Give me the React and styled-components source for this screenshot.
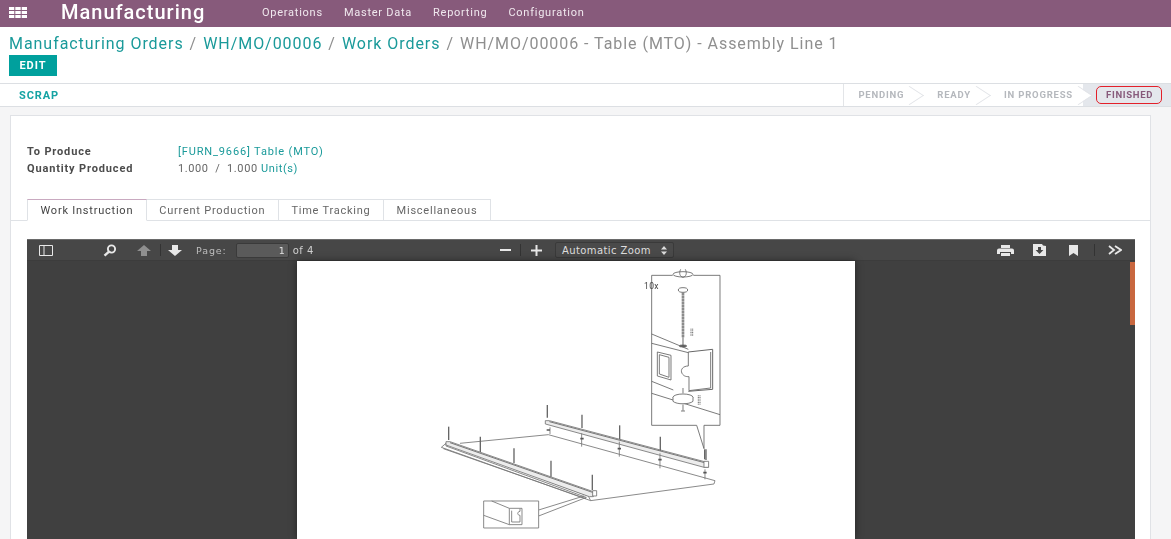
import styled, { createGlobalStyle } from "styled-components";

const GlobalStyle = createGlobalStyle`
  html, body {
    margin: 0;
    height: 100%;
    overflow: hidden;
    background: #f5f5f6;
    font-family: Roboto, "Liberation Sans", sans-serif;
  }
  * {
    box-sizing: border-box;
  }
`;

const STEPS = ["PENDING", "READY", "IN PROGRESS"];
const TABS = ["Work Instruction", "Current Production", "Time Tracking", "Miscellaneous"];
const MENU = ["Operations", "Master Data", "Reporting", "Configuration"];

function Bolts({ points }) {
  return points.map(([x, y, h], i) => (
    <path key={i} d={`M${x} ${y}V${y + h}`} strokeWidth="4" stroke="#666" />
  ));
}

function AssemblyDrawing() {
  return (
    <Drawing viewBox="297 261 558 278">
      {/* zoomed detail of the screw and the rail */}
      <g transform="translate(620 262) scale(.3333)" fill="none" stroke="#666" strokeWidth="2.6">
        <path d="M158 40H95V490H230L252 560V490H300V40H220" />
        <ellipse cx="189" cy="37" rx="30" ry="8" fill="#fff" />
        <path d="M182 22C176 34 180 44 189 46C198 44 202 34 196 22" />
        <ellipse cx="189" cy="84" rx="14" ry="7" />
        <path d="M189 92V226" strokeWidth="8" stroke="#666" strokeDasharray="3 1.5" />
        <path d="M189 226V250" strokeWidth="3" />
        <ellipse cx="189" cy="252" rx="11" ry="3" fill="#555" />
        <path d="M95 216L205 262M95 244L205 272M95 358L160 384M95 394L300 458" />
        <path d="M205 270L278 262V382L205 388" strokeWidth="3" />
        <path d="M205 270V312C190 312 180 322 186 334C192 344 200 344 207 344V386L272 378V270" />
        <path d="M112 270L153 280V354L112 342Z" />
        <path d="M118 278L147 286V346L118 336Z" />
        <path d="M189 378V394" />
        <ellipse cx="189" cy="406" rx="30" ry="10" fill="#fff" />
        <path d="M159 406V418C170 428 208 428 219 418V406" fill="#fff" />
        <path d="M189 428V446M183 447H195" />
        <path d="M213 200V222M218 200V222M235 400V428M240 400V428" strokeDasharray="3 2" strokeWidth="3" />
        <path d="M258 562V594" strokeWidth="4" />
      </g>
      <text x="644" y="289" fontFamily="Roboto, sans-serif" fontSize="8.5" fill="#444" letterSpacing=".4">
        10x
      </text>
      {/* table top with the two rails */}
      <g transform="translate(430 390) scale(.3333)" fill="none" stroke="#777" strokeWidth="2.6">
        <path d="M34 172L48 160L475 318L482 332L34 172Z" fill="#fff" />
        <path d="M40 176L468 326M48 160L48 168L468 322" />
        <path d="M48 155L60 155L490 305V320L478 320L48 165Z" fill="#ececec" strokeWidth="2.6" />
        <path d="M60 158L490 308" strokeWidth="3" />
        <path d="M90 160L355 134L855 272L852 282L482 332" />
        <path d="M346 92H358L835 218V232H822L346 102Z" fill="#ececec" strokeWidth="2.6" />
        <path d="M358 95L835 221" strokeWidth="3" />
        <path d="M360 112V132M455 130V170M568 155V200M690 190V235M825 238V268" />
        <Bolts
          points={[
            [56, 110, 40],
            [151, 140, 46],
            [252, 175, 44],
            [363, 212, 48],
            [487, 254, 46],
            [352, 45, 38],
            [456, 74, 40],
            [569, 106, 42],
            [691, 140, 42],
            [824, 178, 30],
          ]}
        />
        <path d="M350 120H360M451 146H461M563 176H573M685 209H695M820 248H830" strokeWidth="5" stroke="#555" />
        <path d="M822 214H836V232H822Z" fill="#fff" />
        <path d="M488 302H500V318H488Z" fill="#fff" />
        <path d="M326 360L462 318M326 378L470 322" />
        <path d="M161 333H326V414H161Z" fill="#fff" />
        <path d="M161 376L238 404M185 333L238 355H276V404H238V355M245 362V396H270V376C262 376 260 366 270 364V356" />
      </g>
    </Drawing>
  );
}

export default function App() {
  return (
    <Page>
      <GlobalStyle />
      <Navbar>
        <AppsIcon>
          <svg width="18" height="11" viewBox="0 0 18 11" fill="#fff">
            <path d="M0 0h5.300v3H0zM6.300 0h5.400v3H6.300zM12.700 0H18v3h-5.300zM0 4h5.300v3H0zM6.300 4h5.400v3H6.300zM12.700 4H18v3h-5.300zM0 8h5.300v3H0zM6.300 8h5.400v3H6.300zM12.700 8H18v3h-5.300z" />
          </svg>
        </AppsIcon>
        <Brand>Manufacturing</Brand>
        <Menu>
          {MENU.map((item) => (
            <MenuItem key={item}>{item}</MenuItem>
          ))}
        </Menu>
      </Navbar>
      <ControlPanel>
        <Breadcrumb>
          <Crumb>Manufacturing Orders</Crumb>
          <Slash>/</Slash>
          <Crumb>WH/MO/00006</Crumb>
          <Slash>/</Slash>
          <Crumb>Work Orders</Crumb>
          <Slash>/</Slash>
          <span>WH/MO/00006 - Table (MTO) - Assembly Line 1</span>
        </Breadcrumb>
        <EditButton>EDIT</EditButton>
      </ControlPanel>
      <StatusRow>
        <ScrapButton>SCRAP</ScrapButton>
        <Steps>
          {STEPS.map((step) => (
            <Step key={step}>{step}</Step>
          ))}
          <ActiveStep>
            FINISHED
            <RedMark />
          </ActiveStep>
        </Steps>
      </StatusRow>
      <Content>
        <Sheet>
          <Fields>
            <FieldLabel>To Produce</FieldLabel>
            <FieldLink>[FURN_9666] Table (MTO)</FieldLink>
            <FieldLabel>Quantity Produced</FieldLabel>
            <FieldValue>
              1.000 &nbsp;/&nbsp; 1.000 <FieldLink>Unit(s)</FieldLink>
            </FieldValue>
          </Fields>
          <Tabs>
            {TABS.map((tab, i) => (
              <Tab key={tab} $active={i === 0}>
                {tab}
              </Tab>
            ))}
          </Tabs>
          <Viewer>
            <Toolbar>
              <ToolGroup $width={460}>
                <ToolButton>
                  <svg width="14" height="11" viewBox="0 0 14 11">
                    <path d="M.5.5h13v10H.5z" fill="none" stroke="#e8e8e8" />
                    <path d="M5 1v9" stroke="#e8e8e8" />
                  </svg>
                </ToolButton>
                <Spacer $width={32} />
                <ToolButton>
                  <svg width="14" height="13" viewBox="0 0 14 13">
                    <circle cx="8.500" cy="5" r="3.600" fill="none" stroke="#e8e8e8" strokeWidth="1.900" />
                    <path d="M6 7.600L1.500 11.600" stroke="#e8e8e8" strokeWidth="2.400" />
                  </svg>
                </ToolButton>
                <Spacer $width={2} />
                <ToolButton>
                  <svg width="14" height="11" viewBox="0 0 14 11">
                    <path d="M7 0L14 6H10V11H4V6H0Z" fill="#8f8f8f" />
                  </svg>
                </ToolButton>
                <Separator />
                <ToolButton $width={28}>
                  <svg width="14" height="11" viewBox="0 0 14 11">
                    <path d="M7 11L14 5H10V0H4V5H0Z" fill="#e8e8e8" />
                  </svg>
                </ToolButton>
                <PageLabel>Page:</PageLabel>
                <PageInput>1</PageInput>
                <PageCount>of 4</PageCount>
              </ToolGroup>
              <ToolGroup>
                <ToolButton $width={30}>
                  <svg width="11" height="3" viewBox="0 0 11 3">
                    <path d="M0 0h11v2H0z" fill="#e8e8e8" />
                  </svg>
                </ToolButton>
                <Separator />
                <ToolButton $width={30}>
                  <svg width="11" height="11" viewBox="0 0 11 11">
                    <path d="M4.500 0h2v4.500H11v2H6.500V11h-2V6.500H0v-2h4.500z" fill="#e8e8e8" />
                  </svg>
                </ToolButton>
                <ZoomSelect>
                  Automatic Zoom
                  <svg width="6" height="9" viewBox="0 0 6 9">
                    <path d="M3 0L6 3.500H0zM3 9L0 5.500H6z" fill="#ddd" />
                  </svg>
                </ZoomSelect>
              </ToolGroup>
              <ToolGroup $right>
                <ToolButton>
                  <svg width="17" height="11" viewBox="0 0 17 11">
                    <path d="M4 0h9v3H4z" fill="#e8e8e8" />
                    <path d="M2 3.500h13a2 2 0 0 1 2 2V9h-3V7H3v2H0V5.500a2 2 0 0 1 2-2z" fill="#e8e8e8" />
                    <path d="M4 8h9v3H4z" fill="#e8e8e8" />
                  </svg>
                </ToolButton>
                <Spacer $width={2} />
                <ToolButton>
                  <svg width="13" height="12" viewBox="0 0 13 12">
                    <path d="M0 0h9l1 1.500L13 2v10H0z" fill="#e8e8e8" />
                    <path d="M5 3h3v3h2.400L6.500 10 2.600 6H5z" fill="#474747" />
                  </svg>
                </ToolButton>
                <Spacer $width={2} />
                <ToolButton>
                  <svg width="9" height="11" viewBox="0 0 9 11">
                    <path d="M0 0h9v11L4.500 8 0 11z" fill="#e8e8e8" />
                  </svg>
                </ToolButton>
                <Spacer $width={5} />
                <Separator />
                <Spacer $width={4} />
                <ToolButton>
                  <svg width="14" height="10" viewBox="0 0 14 10" fill="none" stroke="#e8e8e8" strokeWidth="1.800">
                    <path d="M1 1l5 4-5 4M7 1l6 4-6 4" />
                  </svg>
                </ToolButton>
              </ToolGroup>
            </Toolbar>
            <ViewerBody>
              <PdfPage>
                <AssemblyDrawing />
              </PdfPage>
              <ScrollThumb />
            </ViewerBody>
          </Viewer>
        </Sheet>
      </Content>
    </Page>
  );
}

const Page = styled.div`
  filter: blur(0.3px);
`;
const Navbar = styled.header`
  display: flex;
  align-items: center;
  height: 27px;
  padding: 0 0 3px 9px;
  background: #875a7b;
  color: #fff;
`;
const AppsIcon = styled.span`
  display: flex;
  width: 52px;
`;
const Brand = styled.span`
  width: 201px;
  font-size: 20px;
  font-weight: 500;
  letter-spacing: 1px;
`;
const Menu = styled.nav`
  display: flex;
  gap: 21px;
`;
const MenuItem = styled.a`
  font-size: 11px;
  letter-spacing: 0.75px;
  color: #f0e8ee;
`;
const ControlPanel = styled.div`
  height: 56px;
  padding: 5px 9px 0;
  background: #fff;
`;
const Breadcrumb = styled.div`
  display: flex;
  gap: 6px;
  height: 23px;
  align-items: center;
  font-size: 16px;
  letter-spacing: 0.95px;
  white-space: nowrap;
  color: #8f8f8f;
`;
const Crumb = styled.a`
  color: #1a9a9a;
`;
const Slash = styled.span`
  color: #8f8f8f;
`;
const EditButton = styled.button`
  display: block;
  width: 48px;
  height: 21px;
  padding: 0;
  border: 0;
  background: #00a09d;
  color: #fff;
  font: 700 11px Roboto, sans-serif;
  letter-spacing: 1px;
`;
const StatusRow = styled.div`
  display: flex;
  justify-content: space-between;
  height: 24px;
  background: #fff;
  border-top: 1px solid #dcdfe3;
  border-bottom: 1px solid #dcdfe3;
`;
const ScrapButton = styled.a`
  align-self: center;
  margin-left: 19px;
  font-size: 11px;
  font-weight: 700;
  letter-spacing: 0.9px;
  color: #15a3a3;
`;
const Steps = styled.div`
  display: flex;
  height: 100%;
  border-left: 1px solid #e3e5e8;
`;
const Step = styled.div`
  position: relative;
  display: flex;
  align-items: center;
  padding: 0 10px 2px 14px;
  margin-right: 9px;
  font-size: 9.5px;
  font-weight: 700;
  letter-spacing: 0.8px;
  color: #b5b8bd;
  &::after {
    content: "";
    position: absolute;
    z-index: 1;
    top: 3px;
    right: -4px;
    width: 16px;
    height: 16px;
    transform: rotate(45deg) skew(-12deg, -12deg);
    background: linear-gradient(45deg, transparent 50%, #fff 50%);
    border-top: 1px solid #e2e4e8;
    border-right: 1px solid #e2e4e8;
  }
`;
const ActiveStep = styled.div`
  position: relative;
  display: flex;
  align-items: center;
  width: 88px;
  margin-left: -9px;
  padding: 0 0 1px 23px;
  font-size: 9.5px;
  font-weight: 700;
  letter-spacing: 0.7px;
  color: #875a7b;
  background: #e4e7ec;
`;
const RedMark = styled.span`
  position: absolute;
  z-index: 2;
  top: 2px;
  left: 13px;
  width: 66px;
  height: 18px;
  border: 1.5px solid #e3202a;
  border-radius: 5px;
`;
const Content = styled.main`
  padding: 8px 20px 0 10px;
`;
const Sheet = styled.section`
  height: 424px;
  padding: 27px 15px 0 16px;
  background: #fff;
  border: 1px solid #e0e2e6;
  border-bottom: 0;
`;
const Fields = styled.div`
  display: grid;
  grid-template-columns: 151px 1fr;
  grid-auto-rows: 17px;
  align-items: center;
  font-size: 11px;
  letter-spacing: 0.85px;
`;
const FieldLabel = styled.span`
  font-weight: 700;
  color: #4c4c4c;
`;
const FieldLink = styled.a`
  color: #1a9a9a;
`;
const FieldValue = styled.span`
  color: #666;
  letter-spacing: 0.6px;
`;
const Tabs = styled.div`
  display: flex;
  height: 22px;
  margin: 22px -15px 0 -16px;
  padding-left: 16px;
  border-bottom: 1px solid #dfe2e6;
`;
const Tab = styled.div`
  display: flex;
  align-items: center;
  height: 22px;
  padding: 0 12.5px;
  font-size: 11px;
  letter-spacing: 0.77px;
  white-space: nowrap;
  color: ${(p) => (p.$active ? "#444" : "#666")};
  background: #fff;
  border: 1px solid #dfe2e6;
  border-left-width: ${(p) => (p.$active ? "1px" : "0")};
  border-bottom-color: ${(p) => (p.$active ? "#fff" : "#dfe2e6")};
  border-top-color: ${(p) => (p.$active ? "#c9a9c0" : "#dfe2e6")};
`;
const Viewer = styled.div`
  margin-top: 18px;
  background: #404040;
`;
const Toolbar = styled.div`
  display: flex;
  align-items: center;
  height: 22px;
  background: #474747;
  border-top: 1px solid #6a6a6a;
  border-bottom: 1px solid #3c3c3c;
`;
const ToolGroup = styled.div`
  display: flex;
  align-items: center;
  width: ${(p) => (p.$width ? `${p.$width}px` : "auto")};
  margin-left: ${(p) => (p.$right ? "auto" : "0")};
  padding-left: ${(p) => (p.$right ? "0" : "3px")};
  padding-right: ${(p) => (p.$right ? "4px" : "0")};
`;
const ToolButton = styled.span`
  display: flex;
  align-items: center;
  justify-content: center;
  width: ${(p) => p.$width || 32}px;
  height: 20px;
`;
const Spacer = styled.span`
  width: ${(p) => p.$width}px;
`;
const Separator = styled.span`
  width: 1px;
  height: 12px;
  background: #333;
`;
const PageLabel = styled.span`
  margin-left: 7px;
  font-family: "DejaVu Sans", sans-serif;
  font-size: 9.5px;
  letter-spacing: 0.9px;
  color: #bdbdbd;
`;
const PageInput = styled.span`
  width: 53px;
  height: 15px;
  margin-left: 9px;
  padding-right: 3px;
  text-align: right;
  font-family: "DejaVu Sans", sans-serif;
  font-size: 9.5px;
  line-height: 14px;
  color: #e0e0e0;
  background: #5a5a5a;
  border: 1px solid #3a3a3a;
  border-radius: 2px;
`;
const PageCount = styled.span`
  margin-left: 4px;
  font-family: "DejaVu Sans", sans-serif;
  font-size: 10px;
  letter-spacing: 0.5px;
  color: #d0d0d0;
`;
const ZoomSelect = styled.span`
  display: flex;
  align-items: center;
  justify-content: space-between;
  width: 119px;
  height: 16px;
  margin-left: 4px;
  padding: 0 6px;
  font-family: "DejaVu Sans", sans-serif;
  font-size: 10px;
  letter-spacing: 0.4px;
  white-space: nowrap;
  color: #dedede;
  background: #4a4a4a;
  border: 1px solid #3a3a3a;
  border-radius: 2px;
`;
const ViewerBody = styled.div`
  position: relative;
  display: flex;
  justify-content: center;
  height: 278px;
  padding-right: 10px;
`;
const PdfPage = styled.div`
  width: 558px;
  height: 278px;
  background: #fff;
  box-shadow: 0 0 8px rgba(0, 0, 0, 0.45);
`;
const Drawing = styled.svg`
  display: block;
  width: 558px;
  height: 278px;
`;
const ScrollThumb = styled.div`
  position: absolute;
  top: 1px;
  right: 0;
  width: 5px;
  height: 63px;
  background: #c8673f;
`;
